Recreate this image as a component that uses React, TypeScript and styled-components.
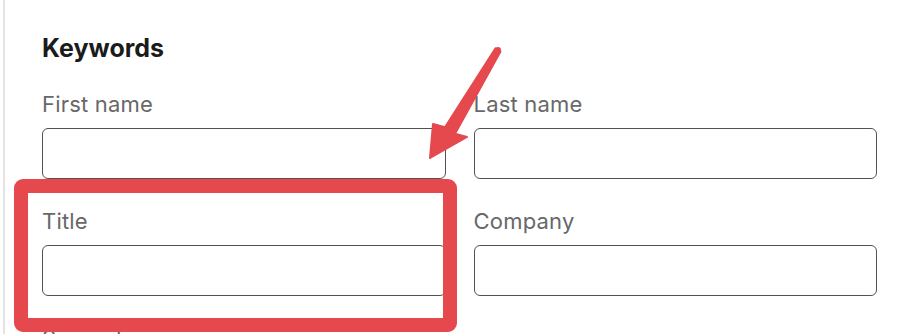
import React from 'react';
import styled, { createGlobalStyle } from 'styled-components';

const GlobalStyle = createGlobalStyle`
    html, body {
        margin: 0;
        padding: 0;
        background: #fff;
        overflow: hidden;
    }
    body {
        font-family: Inter, 'Liberation Sans', sans-serif;
    }
`;

const fields = [
    { id: 'first', label: 'First name' },
    { id: 'last', label: 'Last name' },
    { id: 'title', label: 'Title' },
    { id: 'company', label: 'Company' },
    { id: 'seniority', label: 'Seniority' },
];

const App: React.FC = () => {
    return (
        <>
            <GlobalStyle />
            <Page>
                <Section>
                    <Heading>Keywords</Heading>
                    <FieldGrid>
                        {fields.map((f) => (
                            <Field key={f.id}>
                                <Label htmlFor={f.id}>{f.label}</Label>
                                <Input id={f.id} type="text" />
                            </Field>
                        ))}
                    </FieldGrid>
                </Section>

                {/* annotation overlay */}
                <Highlight />
                <Arrow viewBox="0 0 900 334">
                    <path
                        d="M495.5 48.4 L500.5 51.6 L455 133.7 L467 137 L430 158 L433 124 L445 127.3 Z"
                        fill="#e5484d"
                        stroke="#e5484d"
                        strokeWidth="2"
                        strokeLinejoin="round"
                    />
                    <circle cx="498" cy="50" r="3" fill="#e5484d" />
                </Arrow>
            </Page>
        </>
    );
};

const Page = styled.div`
    position: relative;
    height: 334px;
    margin-left: 3px;
    border-left: 2px solid #e4e4e4;
    padding: 32px 23px 0 37px;
    box-sizing: border-box;
    overflow: hidden;
`;

const Section = styled.section`
    display: flex;
    flex-direction: column;
`;

const Heading = styled.h2`
    margin: 0 0 28px;
    font-size: 25px;
    line-height: 32px;
    font-weight: 700;
    color: #1b1b1b;
`;

const FieldGrid = styled.div`
    display: grid;
    grid-template-columns: 1fr 1fr;
    column-gap: 28px;
    row-gap: 30px;
`;

const Field = styled.div`
    display: flex;
    flex-direction: column;
    gap: 12px;
`;

const Label = styled.label`
    font-size: 22px;
    line-height: 24px;
    letter-spacing: 0.2px;
    color: #686868;
`;

const Input = styled.input`
    height: 51px;
    box-sizing: border-box;
    border: 1.6px solid #525252;
    border-radius: 6px;
    background: #fff;
    font: inherit;
    padding: 0 12px;
    outline: none;
`;

const Highlight = styled.div`
    position: absolute;
    left: 9px;
    top: 179px;
    width: 443px;
    height: 153px;
    box-sizing: border-box;
    border: 14px solid #e5484d;
    border-radius: 9px;
    pointer-events: none;
`;

const Arrow = styled.svg`
    position: absolute;
    left: -5px;
    top: 0;
    width: 900px;
    height: 334px;
    pointer-events: none;
`;

export default App;
